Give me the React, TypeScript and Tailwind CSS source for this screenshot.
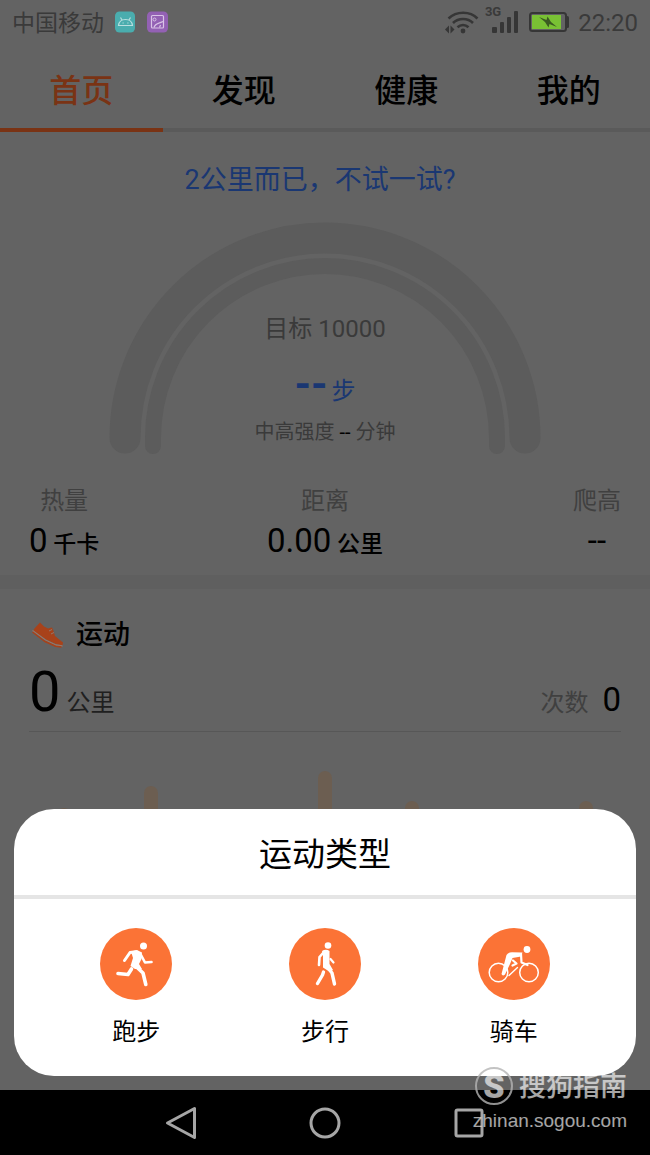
import type { ReactNode } from 'react'

const tabs = ['首页', '发现', '健康', '我的']

const chartBars = [
  { day: 1, height: 'h-[43px]' },
  { day: 2, height: 'h-[65px]' },
  { day: 3, height: 'h-[20px]' },
  { day: 4, height: 'h-[80px]' },
  { day: 5, height: 'h-[50px]' },
  { day: 6, height: 'h-[20px]' },
  { day: 7, height: 'h-[50px]' },
]

function WifiIcon() {
  return (
    <svg width="34" height="25" viewBox="0 0 34 25" fill="none" stroke="#363636" strokeWidth="2.6">
      <path d="M3.5 8.5C11.5 .8 25 .8 32.5 8.5" />
      <path d="M8 13C13.5 7.6 22.7 7.6 28 13" />
      <path d="M12.5 17.3C15.7 14.3 20.3 14.3 23.5 17.3" />
      <circle cx="18" cy="21" r="2.4" fill="#363636" stroke="none" />
      <path d="M0 19.5L4 15.5V23.5ZM9.5 19.5L5.5 15.5V23.5Z" fill="#363636" stroke="none" />
    </svg>
  )
}

function SignalIcon() {
  return (
    <svg width="27" height="24" viewBox="0 0 27 24" fill="#363636">
      <rect x="0" y="17" width="5" height="6" rx="1" />
      <rect x="8" y="12" width="4" height="11" rx="1" />
      <rect x="15" y="7" width="4" height="16" rx="1" />
      <rect x="22" y="1" width="4" height="22" rx="1" />
    </svg>
  )
}

function BatteryIcon() {
  return (
    <svg width="41" height="20" viewBox="0 0 41 20">
      <rect x="1" y="1" width="36" height="18" rx="2.5" fill="none" stroke="#363636" strokeWidth="2" />
      <rect x="3" y="3" width="29" height="14" fill="#79c134" />
      <path d="M38.5 5.5V14.5" stroke="#363636" strokeWidth="3" strokeLinecap="round" />
      <path d="M10 5L17.5 8L18.5 4.5L22 10L28 15L20.5 12L19.5 15.5L16 10Z" fill="#3b5b22" />
    </svg>
  )
}

function StatusBar() {
  return (
    <div className="flex h-11 items-center justify-between px-3 text-[#3a3a3a]">
      <div className="flex items-center gap-[11px]">
        <span className="pt-[3px] text-[23px] leading-8">中国移动</span>
        <svg width="53" height="22" viewBox="0 0 53 22" fill="none">
          <rect x="0" y="0.5" width="20" height="21" rx="4.5" fill="#4aadae" />
          <path d="M3.5 14.5C4 10.5 7 8.5 10.5 8.5S17 10.5 17.5 14.5ZM7 9L5.5 6.5M14 9L15.5 6.5" stroke="#b9dfdf" strokeWidth="1.2" />
          <path d="M7.5 12H8.7M12.3 12H13.5" stroke="#b9dfdf" strokeWidth="1.2" />
          <rect x="32" y="0.5" width="21" height="21" rx="4.5" fill="#9361b4" />
          <rect x="36.5" y="4.5" width="12" height="12.5" rx="1" stroke="#d9c4e6" strokeWidth="1.2" />
          <circle cx="39.5" cy="8.5" r="1.5" stroke="#d9c4e6" />
          <path d="M39 16.5C40 12 44 12.5 48 10.5M44.5 16.5L45.5 14" stroke="#d9c4e6" strokeWidth="1.2" />
        </svg>
      </div>
      <div className="flex items-center">
        <WifiIcon />
        <span className="ml-[6px] self-start text-[13px] leading-[14px] font-bold">3G</span>
        <span className="-ml-[9px]">
          <SignalIcon />
        </span>
        <span className="mr-2 ml-[10px]">
          <BatteryIcon />
        </span>
        <span className="pt-[2px] text-[24px] leading-8">22:20</span>
      </div>
    </div>
  )
}

function Tabs() {
  return (
    <nav className="grid grid-cols-4">
      {tabs.map((tab, i) => (
        <button
          key={tab}
          type="button"
          className={
            i === 0
              ? 'h-[88px] border-b-4 border-[#7a3314] pt-[10px] text-[32px] leading-10 font-medium text-[#7a3314]'
              : 'h-[88px] border-b-4 border-[#5a5a5a] pt-[10px] text-[32px] leading-10 font-medium text-black'
          }
        >
          {tab}
        </button>
      ))}
    </nav>
  )
}

function Gauge() {
  return (
    <div className="mt-[22px] grid justify-center">
      <svg
        className="col-start-1 row-start-1"
        width="432"
        height="234"
        viewBox="0 0 432 234"
        fill="none"
        stroke="#5c5c5c"
        strokeLinecap="round"
      >
        <path d="M16 216A200 200 0 0 1 416 216" strokeWidth="31" />
        <path d="M44 224V216A172 172 0 0 1 388 216V224" strokeWidth="16" />
      </svg>
      <div className="col-start-1 row-start-1 flex flex-col items-center pt-[91px] text-[#3a3a3a]">
        <p className="text-[24px] leading-8">目标 10000</p>
        <p className="mt-4 flex h-12 items-baseline gap-1 leading-[48px] text-[#1a3772]">
          <span className="text-[42px] font-bold">--</span>
          <span className="text-[24px]">步</span>
        </p>
        <p className="mt-[7px] text-[20px] leading-8">
          中高强度 <span className="text-black">--</span> 分钟
        </p>
      </div>
    </div>
  )
}

function Metric({ label, className, children }: { label: string; className: string; children: ReactNode }) {
  return (
    <div className={`flex flex-col items-center ${className}`}>
      <span className="text-[24px] leading-8 text-[#404040]">{label}</span>
      <p className="text-[23px] leading-[48px] font-medium text-black">{children}</p>
    </div>
  )
}

function ShoeIcon() {
  return (
    <svg width="32" height="26" viewBox="0 0 32 26">
      <path d="M2 7L8 0.5L12 4.5L16 6.5L20 5.5L21.5 9L23 14L31 20.5L30.5 23.5L24 22L14 17.5L1.5 9Z" fill="#a8421a" />
      <path d="M0.5 8.5L13.5 18L24 23L30.5 24" fill="none" stroke="#93796d" strokeWidth="1.3" />
      <path d="M0.5 10L13 19.5L23.5 24.3L29.5 25" fill="none" stroke="#a8421a" strokeWidth="1.5" />
      <path d="M17 9L20 7.5M19 12L22 10.5" stroke="#93796d" strokeWidth="1" />
    </svg>
  )
}

function RunIcon() {
  return (
    <svg width="72" height="72" viewBox="0 0 72 72" fill="none" stroke="#fff" strokeLinecap="round" strokeLinejoin="round">
      <circle cx="43.5" cy="18" r="3.5" fill="#fff" stroke="none" />
      <path d="M31 23.5L37 22L42 24.5L41.5 31L39 36L42 41L35 41L30.5 38L33 30Z" fill="#fff" stroke="none" />
      <path d="M36 23.7L30 24.5L24.5 32.5" strokeWidth="3" />
      <path d="M41 27L45 34.5L51.5 34" strokeWidth="2.6" />
      <path d="M31.5 41L28 46.500L18 45.500" strokeWidth="3.6" />
      <path d="M35 37.5L43 45L45.8 56.5" strokeWidth="3.6" />
    </svg>
  )
}

function WalkIcon() {
  return (
    <svg width="72" height="72" viewBox="0 0 72 72" fill="none" stroke="#fff" strokeLinecap="round" strokeLinejoin="round">
      <circle cx="39" cy="17.5" r="3.3" fill="#fff" stroke="none" />
      <path d="M33 23Q37 20.5 40.5 23L40.5 36L44 42L41 44L34 39.5V27Z" fill="#fff" stroke="none" />
      <path d="M35 24L30.5 29L30 37" strokeWidth="2.6" />
      <path d="M41.5 31L44.5 34.5" strokeWidth="2.2" />
      <path d="M37.5 38L43 45L45.5 56" strokeWidth="3.4" />
      <path d="M34.5 44L33.5 47L28.5 55.5" strokeWidth="3.4" />
    </svg>
  )
}

function BikeIcon() {
  return (
    <svg width="72" height="72" viewBox="0 0 72 72" fill="none" stroke="#fff" strokeLinecap="round" strokeLinejoin="round">
      <circle cx="20.5" cy="44.5" r="9.3" strokeWidth="1.5" />
      <circle cx="51" cy="44.5" r="9.3" strokeWidth="1.5" />
      <circle cx="49" cy="21.5" r="3.4" fill="#fff" stroke="none" />
      <path d="M43 26L43.5 34.5L49.5 37" strokeWidth="2.2" />
      <path d="M28.5 27Q30 24.500 34 24.300L44.500 24.500L43 28.500L34.500 30L32 36L27 46.500Q24.500 48.500 23.500 46Z" fill="#fff" stroke="none" />
      <path d="M35 32.5L38.5 35.5L34.5 37.5" strokeWidth="2.2" />
      <path d="M31 47.5L39.5 39.5" strokeWidth="1.4" />
    </svg>
  )
}

const sports = [
  { name: '跑步', icon: <RunIcon /> },
  { name: '步行', icon: <WalkIcon /> },
  { name: '骑车', icon: <BikeIcon /> },
]

function SportDialog() {
  return (
    <div
      role="dialog"
      aria-labelledby="sport-title"
      className="absolute inset-x-[14px] bottom-[14px] rounded-[40px] bg-white text-black"
    >
      <h2 id="sport-title" className="border-b-4 border-[#e5e5e5] pt-6 pb-[18px] text-center text-[33px] leading-[44px]">
        运动类型
      </h2>
      <div className="grid grid-cols-3 px-7 pt-[29px] pb-7">
        {sports.map((sport) => (
          <button key={sport.name} type="button" className="flex flex-col items-center gap-4">
            <span className="rounded-full bg-[#fb7336]">{sport.icon}</span>
            <span className="text-[24px] leading-8">{sport.name}</span>
          </button>
        ))}
      </div>
    </div>
  )
}

function Watermark() {
  return (
    <div className="absolute right-[23px] bottom-5 flex flex-col items-end text-white/65">
      <div className="flex items-center gap-[6px]">
        <span className="grid size-[38px] place-items-center rounded-full border-2 border-[#b4b4b4]/80 text-[34px] leading-8 font-black">
          S
        </span>
        <span className="pt-[2px] text-[27px] leading-10 font-medium">搜狗指南</span>
      </div>
      <span className="font-['Liberation_Sans',sans-serif] text-[19px] leading-7">zhinan.sogou.com</span>
    </div>
  )
}

function SystemNav() {
  return (
    <div className="flex h-[65px] items-center justify-center gap-[112px] bg-black">
      <button type="button" aria-label="返回">
        <svg width="32" height="34" viewBox="0 0 32 34" fill="none" stroke="#a6a6a6" strokeWidth="3" strokeLinejoin="round">
          <path d="M2.5 17L29.5 2.5V31.5Z" />
        </svg>
      </button>
      <button type="button" aria-label="主屏幕">
        <svg width="32" height="32" viewBox="0 0 32 32" fill="none" stroke="#a6a6a6" strokeWidth="3">
          <circle cx="16" cy="16" r="14" />
        </svg>
      </button>
      <button type="button" aria-label="最近任务">
        <svg width="32" height="32" viewBox="0 0 32 32" fill="none" stroke="#a6a6a6" strokeWidth="3">
          <rect x="3" y="3" width="26" height="26" rx="1.5" />
        </svg>
      </button>
    </div>
  )
}

export default function App() {
  return (
    <div className="relative flex min-h-screen flex-col bg-[#636363] font-[Roboto,'Noto_Sans_CJK_SC',sans-serif]">
      <main className="relative flex-1 pb-[230px]">
        <StatusBar />
        <Tabs />

        <p className="mt-7 pr-[10px] text-center text-[27px] leading-10 text-[#1a3772]">2公里而已，不试一试?</p>
        <Gauge />

        <div className="mt-[29px] grid grid-cols-3 px-[29px] pb-[6px]">
          <Metric label="热量" className="justify-self-start">
            <span className="text-[33px] font-normal">0</span> 千卡
          </Metric>
          <Metric label="距离" className="justify-self-center">
            <span className="text-[33px] font-normal">0.00</span> 公里
          </Metric>
          <Metric label="爬高" className="justify-self-end">
            <span className="text-[33px] font-normal">--</span>
          </Metric>
        </div>

        <div className="h-[14px] bg-[#5f5f5f]" />

        <section className="px-[29px]">
          <h2 className="flex items-center gap-3 pt-[26px] pl-[3px] text-[27px] leading-10 font-medium text-black">
            <ShoeIcon />
            运动
          </h2>
          <div className="flex items-baseline justify-between border-b border-[#575757] pt-[11px] pb-[2px] text-[24px] leading-[52px]">
            <p className="text-[#202020]">
              <span className="text-[56px] text-black">0</span> 公里
            </p>
            <p className="text-[#404040]">
              次数 <span className="ml-2 text-[33px] text-black">0</span>
            </p>
          </div>
          <div className="flex h-[119px] items-end justify-between px-7">
            {chartBars.map((bar) => (
              <span key={bar.day} className={`w-[14px] rounded-t-full bg-[#6c5e51] ${bar.height}`} />
            ))}
          </div>
        </section>

        <SportDialog />
      </main>
      <SystemNav />
      <Watermark />
    </div>
  )
}
